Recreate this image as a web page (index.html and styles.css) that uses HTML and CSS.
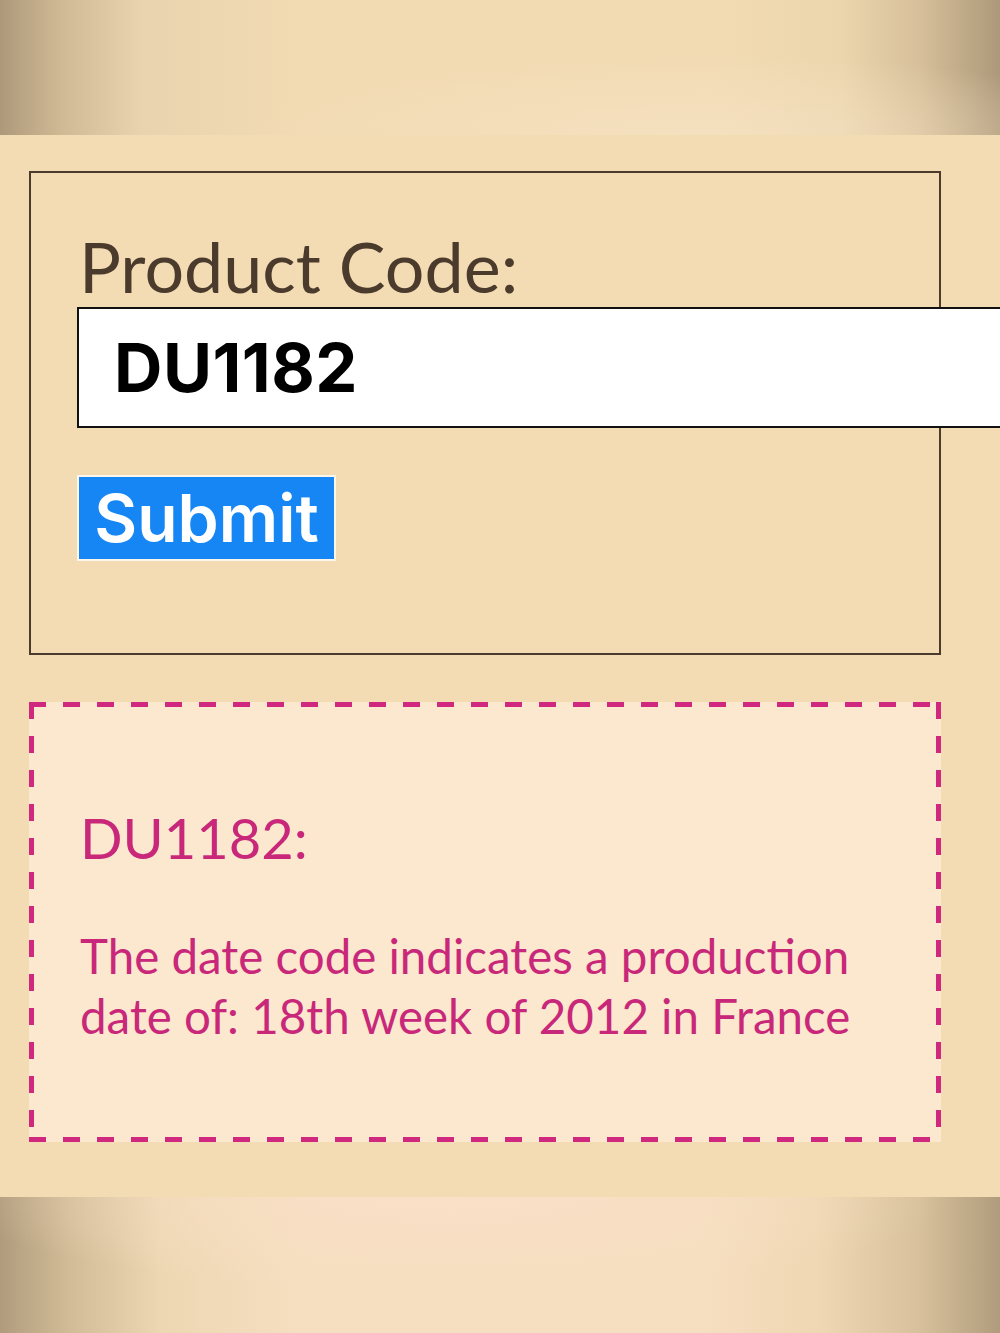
FILE: index.html
```html
<!DOCTYPE html>
<html lang="en">
<head>
<meta charset="utf-8">
<title>Product Code Lookup</title>
<link rel="stylesheet" href="styles.css">
</head>
<body>
  <div class="band band-top"></div>
  <main class="content">
    <form class="lookup">
      <label class="lookup-label" for="code">Product Code:</label>
      <input class="lookup-input" id="code" type="text" value="DU1182">
      <button class="lookup-submit" type="button">Submit</button>
    </form>
    <section class="result">
      <h2 class="result-code">DU1182:</h2>
      <p class="result-text">The date code indicates a production date of: 18th week of 2012 in France</p>
    </section>
  </main>
  <div class="band band-bottom"></div>
</body>
</html>
```

FILE: styles.css
```css
html, body {
  margin: 0;
  padding: 0;
}

body {
  width: 1000px;
  overflow: hidden;
  background: #f3dcb3;
  font-family: Lato, "Noto Sans", sans-serif;
}

/* decorative bands above and below the content */
.band {
  height: 135px;
}

.band-top {
  background:
    radial-gradient(ellipse 45% 60% at 70% 100%, rgba(246, 226, 196, 0.7), rgba(246, 226, 196, 0) 100%),
    linear-gradient(to right, #ad987a 0%, #cfb994 6%, #e9d3ae 14%, #f2dbb3 30%, #f2dbb3 72%, #ecd6ae 84%, #d6bf99 92%, #ad997a 100%);
}

.band-bottom {
  height: 136px;
  background:
    radial-gradient(ellipse 50% 70% at 45% 0%, rgba(250, 224, 200, 0.8), rgba(250, 224, 200, 0) 100%),
    linear-gradient(to right, #b09c7d 0%, #d2bc97 7%, #edd7b2 16%, #f6dec0 30%, #f6dec0 70%, #efd7b3 82%, #d7c09b 92%, #b09c7d 100%);
}

.content {
  background: #f3dcb3;
  padding: 36px 59px 55px 29px;
  display: flex;
  flex-direction: column;
  gap: 47px;
}

/* lookup form */
.lookup {
  box-sizing: border-box;
  height: 484px;
  border: 2px solid #4b3b2d;
  padding: 52px 0 0 46px;
  display: flex;
  flex-direction: column;
  align-items: flex-start;
  margin: 0;
}

.lookup-label {
  font-size: 70px;
  line-height: 82px;
  color: #4b3b2d;
  margin-left: 2px;
}

.lookup-input {
  box-sizing: border-box;
  width: 940px;
  height: 121px;
  margin: 0;
  border: 2px solid #111;
  border-radius: 0;
  background: #fff;
  padding: 0 0 0 35px;
  font-family: Inter, "Liberation Sans", sans-serif;
  font-weight: 700;
  font-size: 67px;
  letter-spacing: 0.5px;
  color: #000;
  outline: none;
}

.lookup-submit {
  box-sizing: border-box;
  margin-top: 47px;
  width: 259px;
  height: 86px;
  border: 2px solid #fdf6ea;
  border-radius: 0;
  background: #1786f5;
  color: #fff;
  font-family: Inter, "Liberation Sans", sans-serif;
  font-weight: 600;
  font-size: 66px;
  line-height: 1;
  padding: 0;
}

/* decoded result, framed by long magenta dashes */
.result {
  box-sizing: border-box;
  height: 440px;
  background-color: #fce8cf;
  background-image:
    repeating-linear-gradient(to right, #d0287e 0 17px, transparent 17px 34px),
    repeating-linear-gradient(to right, #d0287e 0 17px, transparent 17px 34px),
    repeating-linear-gradient(to bottom, #d0287e 0 17px, transparent 17px 34px),
    repeating-linear-gradient(to bottom, #d0287e 0 17px, transparent 17px 34px);
  background-size: 100% 5px, 100% 5px, 5px 100%, 5px 100%;
  background-position: left top, left bottom, left top, right top;
  background-repeat: no-repeat;
  padding: 103px 40px 0 51px;
  color: #c9287a;
}

.result-code {
  margin: 0;
  font-weight: 400;
  font-size: 56px;
  line-height: 66px;
}

.result-text {
  margin: 55px 0 0;
  font-size: 47.5px;
  line-height: 60px;
}
```
